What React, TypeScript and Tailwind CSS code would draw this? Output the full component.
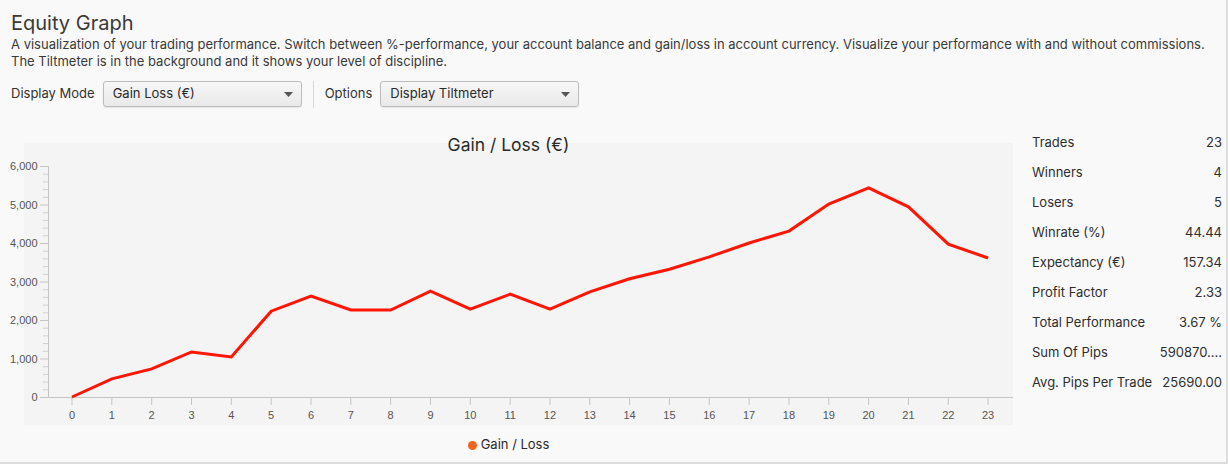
import React from "react";

const values = [
  0, 470, 730, 1170, 1040, 2230, 2620, 2260, 2260, 2750, 2280, 2670, 2280, 2730,
  3070, 3320, 3640, 4000, 4310, 5010, 5430, 4940, 3970, 3610,
];

const stats: [string, string][] = [
  ["Trades", "23"],
  ["Winners", "4"],
  ["Losers", "5"],
  ["Winrate (%)", "44.44"],
  ["Expectancy (€)", "157.34"],
  ["Profit Factor", "2.33"],
  ["Total Performance", "3.67 %"],
  ["Sum Of Pips", "590870...."],
  ["Avg. Pips Per Trade", "25690.00"],
];

// chart geometry (svg coords)
const X0 = 72;
const XSTEP = 39.83;
const Y0 = 266;
const YSCALE = 231 / 6000;
const px = (i: number) => X0 + i * XSTEP;
const py = (v: number) => Y0 - v * YSCALE;

function Dropdown({ label }: { label: string }) {
  return (
    <button className="flex items-center justify-between w-[199px] h-[26px] pl-[9px] pr-[8px] rounded-[3px] border border-[#bcbcbc] bg-gradient-to-b from-[#f7f7f7] to-[#e9e9e9] shadow-[0_1px_1px_rgba(0,0,0,0.08)] text-[13px] text-[#2a2a2a]">
      <span>{label}</span>
      <svg width="9" height="5" viewBox="0 0 9 5">
        <path d="M0 0 L9 0 L4.5 5 Z" fill="#555" />
      </svg>
    </button>
  );
}

function EquityChart() {
  const majors = [0, 1000, 2000, 3000, 4000, 5000, 6000];
  const minors: number[] = [];
  for (let m = 0; m < 6000; m += 1000) {
    for (let k = 200; k < 1000; k += 200) minors.push(m + k);
  }
  const points = values.map((v, i) => `${px(i)},${py(v)}`).join(" ");

  return (
    <svg width="1017" height="300" viewBox="0 0 1017 300" className="block">
      <rect x="24" y="12" width="989" height="282" fill="#f4f4f4" />
      <text x="508.5" y="19.5" textAnchor="middle" fontSize="17.5" fill="#2b2b2b">
        Gain / Loss (€)
      </text>

      {/* y axis */}
      <line x1="48.5" y1={py(6000)} x2="48.5" y2={Y0} stroke="#c4c4c4" />
      {minors.map((v) => (
        <line key={v} x1="43" y1={py(v) + 0.5} x2="48" y2={py(v) + 0.5} stroke="#d0d0d0" />
      ))}
      {majors.map((v) => (
        <g key={v}>
          <line x1="40" y1={py(v) + 0.5} x2="48" y2={py(v) + 0.5} stroke="#c4c4c4" />
          <text x="37.5" y={py(v) + 4} textAnchor="end" fontSize="11" fill="#555" fontFamily="'Liberation Sans', sans-serif">
            {v.toLocaleString("en-US")}
          </text>
        </g>
      ))}

      {/* x axis */}
      <line x1="48" y1={Y0 + 0.5} x2="1013" y2={Y0 + 0.5} stroke="#c4c4c4" />
      {values.map((_, i) => (
        <g key={i}>
          <line x1={px(i)} y1={Y0} x2={px(i)} y2={Y0 + 8} stroke="#c4c4c4" />
          <text x={px(i)} y={Y0 + 21.5} textAnchor="middle" fontSize="11" fill="#555" fontFamily="'Liberation Sans', sans-serif">
            {i}
          </text>
        </g>
      ))}

      <polyline points={points} fill="none" stroke="#ff1500" strokeWidth="3" strokeLinejoin="miter" />
    </svg>
  );
}

export default function App() {
  return (
    <div className="w-[1228px] h-[464px] bg-[#f9f9f9] border-r-2 border-b-2 border-[#dddddd] text-[#333] font-['Inter','Roboto',sans-serif] overflow-hidden">
      <div className="pl-[11px] pt-[10px]">
        <h1 className="text-[20px] leading-[26px] text-[#3a3a3a]">Equity Graph</h1>
        <p className="text-[13px] leading-[17px] text-[#3a3a3a]">
          A visualization of your trading performance. Switch between %-performance, your account balance and gain/loss in account currency. Visualize your performance with and without commissions.
          <br />
          The Tiltmeter is in the background and it shows your level of discipline.
        </p>
        <div className="flex items-center mt-[11px] h-[26px] text-[13px]">
          <span className="mr-[8px]">Display Mode</span>
          <Dropdown label="Gain Loss (€)" />
          <div className="w-px h-[27px] bg-[#d6d6d6] mx-[11px]" />
          <span className="mr-[8px]">Options</span>
          <Dropdown label="Display Tiltmeter" />
        </div>
      </div>

      <div className="flex mt-[21px]">
        <div className="w-[1017px] shrink-0">
          <div className="mt-[3px]">
            <EquityChart />
          </div>
          <div className="flex justify-center items-center gap-[4px] mt-[4px] h-[20px] text-[13px] text-[#2b2b2b]">
            <span className="w-[9px] h-[9px] rounded-full bg-[#f06420]" />
            <span>Gain / Loss</span>
          </div>
        </div>
        <div className="flex-1 pl-[15px] pr-[4px] text-[13px] text-[#2e2e2e]">
          {stats.map(([k, v]) => (
            <div key={k} className="flex items-center justify-between h-[30px]">
              <span>{k}</span>
              <span>{v}</span>
            </div>
          ))}
        </div>
      </div>
    </div>
  );
}
